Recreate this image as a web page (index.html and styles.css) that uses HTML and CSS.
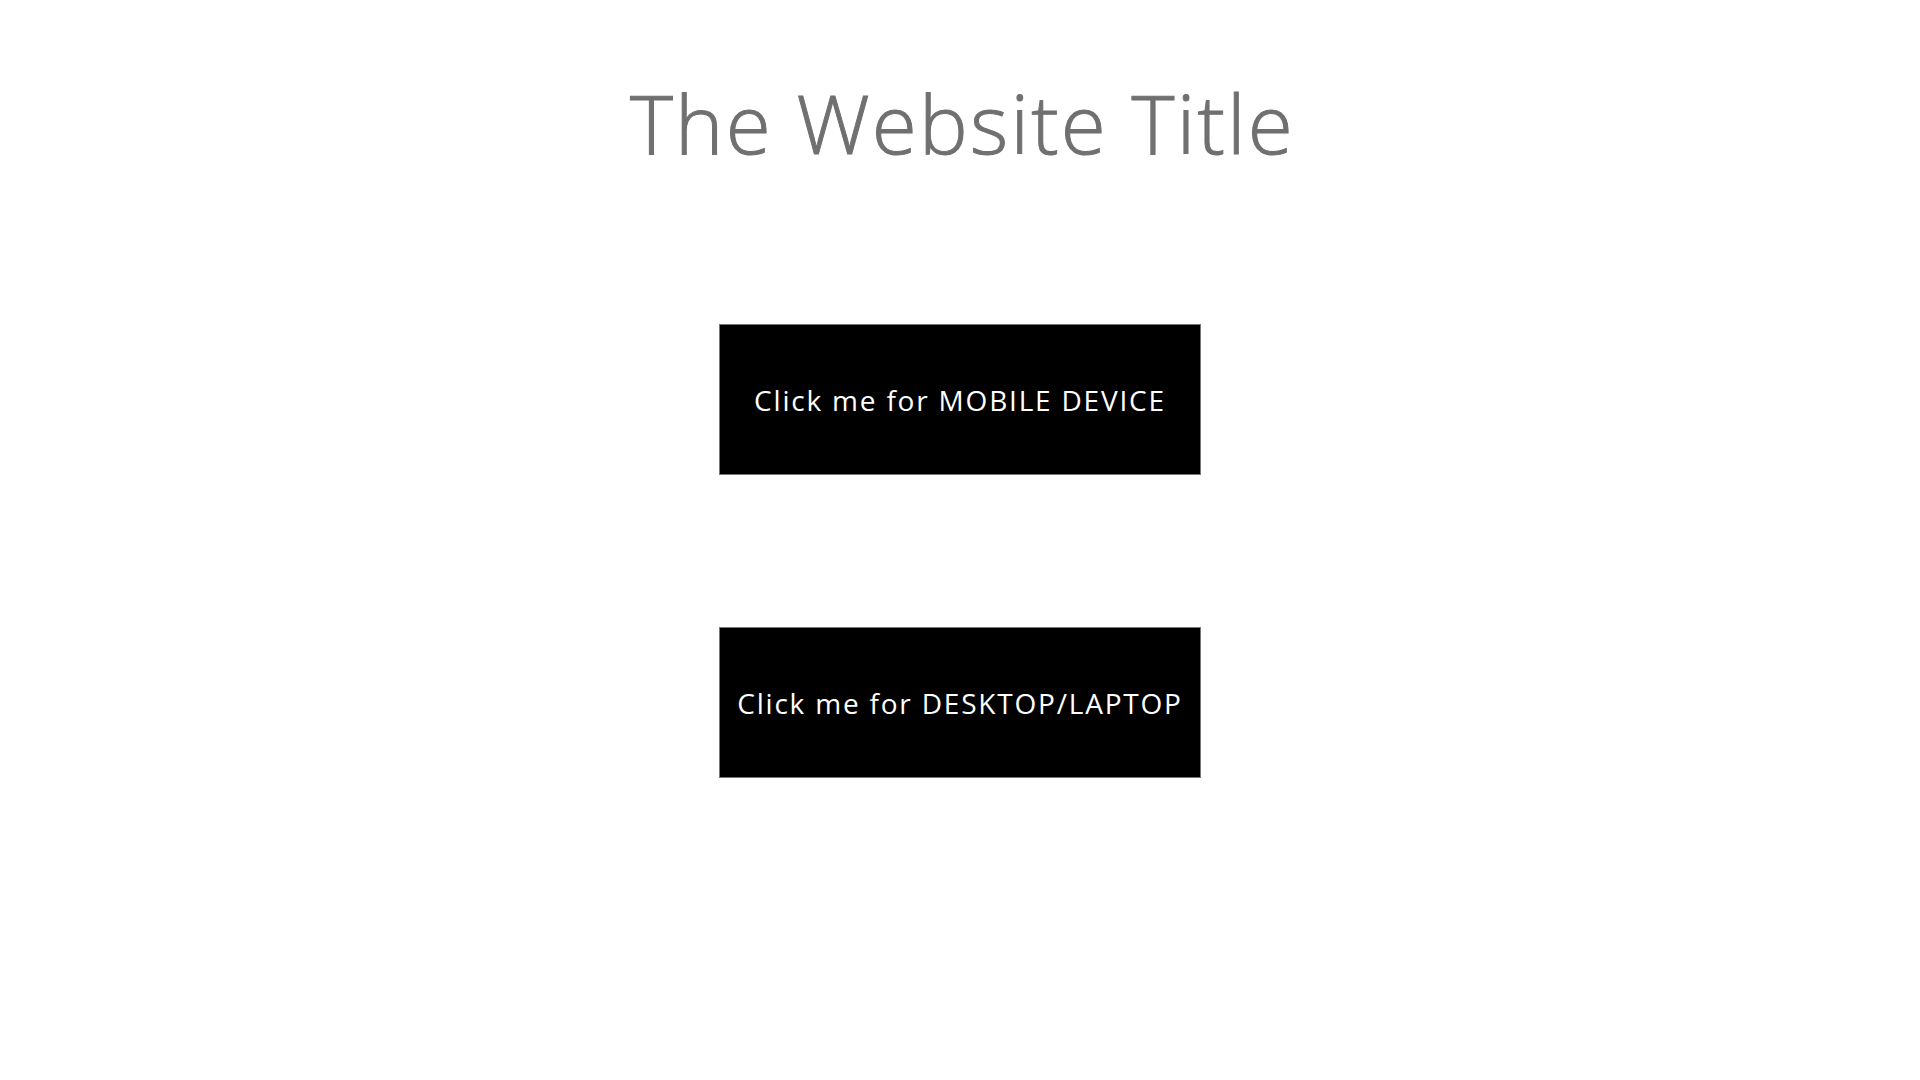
FILE: index.html
```html
<!DOCTYPE html>
<html lang="en">
<head>
<meta charset="utf-8">
<title>The Website Title</title>
<link rel="stylesheet" href="styles.css">
</head>
<body>
<main class="page">
  <h1 class="site-title">The Website Title</h1>
  <div class="choices">
    <a class="choice-btn" href="#">Click me for MOBILE DEVICE</a>
    <a class="choice-btn" href="#">Click me for DESKTOP/LAPTOP</a>
  </div>
</main>
</body>
</html>
```
FILE: styles.css
```css
html, body {
  margin: 0;
  padding: 0;
  background: #ffffff;
}
.page {
  display: flex;
  flex-direction: column;
  align-items: center;
  font-family: "Open Sans", "Noto Sans", sans-serif;
}
.site-title {
  margin: 0;
  padding-top: 67px;
  padding-left: 5px;
  font-size: 82px;
  line-height: 110px;
  font-weight: 300;
  color: #707070;
  -webkit-text-stroke: 1px #707070;
  letter-spacing: 2.2px;
}
.choices {
  display: flex;
  flex-direction: column;
  align-items: center;
  gap: 152px;
  margin-top: 147px;
}
.choice-btn {
  box-sizing: border-box;
  width: 482px;
  height: 151px;
  display: flex;
  align-items: center;
  justify-content: center;
  background: #000000;
  border: 1px solid #767676;
  color: #ffffff;
  text-decoration: none;
  font-size: 28px;
  letter-spacing: 1.8px;
}
```
